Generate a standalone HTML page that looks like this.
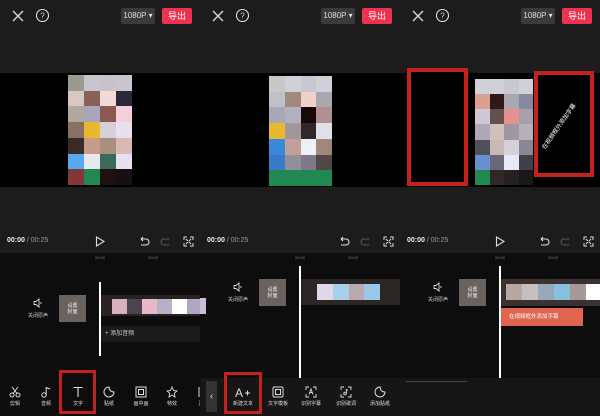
<!DOCTYPE html><html><head><meta charset="utf-8"><style>
*{margin:0;padding:0;box-sizing:border-box}
body{width:600px;height:416px;background:#000;position:relative;overflow:hidden;font-family:"Liberation Sans","Noto Sans CJK SC",sans-serif;color:#ddd}
.p{position:absolute;top:0;width:200px;height:416px;overflow:hidden;background:#0d0d0d}
.a{position:absolute}
.top{left:0;top:0;width:200px;height:73px;background:#1c1c1c}
.vid{left:0;top:73px;width:200px;height:114px;background:#000}
.mid{left:0;top:187px;width:200px;height:66px;background:#1c1c1c}
.res{left:121px;top:8px;width:34px;height:16px;background:#3a3a3a;border-radius:2px;font-size:8px;color:#ddd;line-height:16px;text-align:center}
.exp{left:162px;top:8px;width:30px;height:16px;background:#f0304f;border-radius:2px;font-size:9px;color:#fff;line-height:16px;text-align:center}
.mos{display:grid;grid-template-columns:repeat(4,1fr)}
.mos i{display:block}
.time{left:7px;top:237px;font-size:7px;color:#eee}
.time b{font-weight:bold}
.time span{color:#999}
.lbl{font-size:5px;color:#ccc;text-align:center;width:30px}
.tool{position:absolute;top:386px;width:30px;text-align:center;color:#ddd}
.tool svg{display:block;margin:0 auto}
.tool .t{font-size:5px;line-height:6px;margin-top:3px}
.red{border:3px solid #c1231c;position:absolute}
</style></head><body>

<!-- PANEL 1 -->
<div class="p" style="left:0">
<div class="a top"></div>
<svg class="a" style="left:11px;top:9px" width="14" height="14"><path d="M2 2L12 12M12 2L2 12" stroke="#ddd" stroke-width="1.3"/></svg>
<svg class="a" style="left:35px;top:8px" width="15" height="15"><circle cx="7.5" cy="7.5" r="6" fill="none" stroke="#ddd" stroke-width="1.1"/><text x="7.5" y="10.5" font-size="8" fill="#ddd" text-anchor="middle" font-family="Liberation Sans">?</text></svg>
<div class="a res">1080P ▾</div><div class="a exp">导出</div>
<div class="a vid"></div>
<div class="a mos" style="left:68px;top:75px;width:64px;height:110px;grid-template-rows:repeat(7,1fr)">
<i style="background:#9a9a90"></i><i style="background:#c8c6cc"></i><i style="background:#c6c4ca"></i><i style="background:#c8c6cc"></i>
<i style="background:#d8c8c0"></i><i style="background:#8a6058"></i><i style="background:#f2d8d8"></i><i style="background:#2a2838"></i>
<i style="background:#b0a8a0"></i><i style="background:#a8a6b8"></i><i style="background:#8a5a50"></i><i style="background:#f5d0dc"></i>
<i style="background:#8a7060"></i><i style="background:#e8b830"></i><i style="background:#d8d0d8"></i><i style="background:#e8e0ec"></i>
<i style="background:#3a2a2a"></i><i style="background:#c89a8a"></i><i style="background:#a89080"></i><i style="background:#d8b8b0"></i>
<i style="background:#5aa8f0"></i><i style="background:#e8e8f0"></i><i style="background:#3a6a58"></i><i style="background:#e8e0f0"></i>
<i style="background:#803838"></i><i style="background:#208850"></i><i style="background:#201010"></i><i style="background:#181010"></i>
</div>
<div class="a mid"></div>
<div class="a time"><b>00:00</b><span> / 00:25</span></div>
<svg class="a" style="left:95px;top:236px" width="10" height="11"><path d="M1.5 1L9 5.5L1.5 10Z" fill="none" stroke="#ddd" stroke-width="1.1"/></svg>
<svg class="a" style="left:138px;top:236px" width="12" height="11"><path d="M3 3H8a3 3 0 0 1 0 6H3M3 3l2-2M3 3l2 2" fill="none" stroke="#ddd" stroke-width="1.1"/></svg>
<svg class="a" style="left:160px;top:236px" width="12" height="11"><path d="M9 3H4a3 3 0 0 0 0 6H9" fill="none" stroke="#555" stroke-width="1.1"/></svg>
<svg class="a" style="left:183px;top:236px" width="11" height="11"><path d="M1 4V1H4M7 1H10V4M10 7V10H7M4 10H1V7M3 3L5 5M8 3L6 5M3 8L5 6M8 8L6 6" fill="none" stroke="#ddd" stroke-width="1"/></svg>
<div class="a" style="left:95px;top:255px;font-size:4px;color:#777">00:00</div>
<div class="a" style="left:148px;top:255px;font-size:4px;color:#777">00:02</div>
<svg class="a" style="left:33px;top:298px" width="10" height="10"><path d="M1 3.5H3L6 1V9L3 6.5H1Z M8 4v2" fill="none" stroke="#ddd" stroke-width=".9"/></svg>
<div class="a lbl" style="left:23px;top:312px">关闭原声</div>
<div class="a" style="left:59px;top:295px;width:27px;height:27px;background:#6a625e;font-size:5px;color:#eee;text-align:center;padding-top:8px;line-height:6px">设置<br>封面</div>
<div class="a" style="left:101px;top:295px;width:99px;height:21px;background:#2a2220"></div>
<div class="a mos" style="left:112px;top:299px;width:90px;height:15px;grid-template-columns:repeat(6,1fr)"><i style="background:#d8b0bc"></i><i style="background:#4a4350"></i><i style="background:#e8b8c8"></i><i style="background:#b8b0c8"></i><i style="background:#fff"></i><i style="background:#b0a8c0"></i></div>
<div class="a" style="left:101px;top:326px;width:99px;height:16px;background:#1a1a1a;font-size:6px;color:#ccc;line-height:16px;padding-left:4px">+ 添加音频</div>
<div class="a" style="left:99px;top:282px;width:2px;height:74px;background:#fff"></div>
<div class="tool" style="left:0"><svg width="12" height="12"><circle cx="3" cy="9" r="2" fill="none" stroke="#ddd"/><circle cx="9" cy="9" r="2" fill="none" stroke="#ddd"/><path d="M4 7.5L9 1M8 7.5L3 1" stroke="#ddd"/></svg><div class="t">剪辑</div></div>
<div class="tool" style="left:31px"><svg width="12" height="12"><circle cx="4" cy="9" r="2.2" fill="none" stroke="#ddd"/><path d="M6.2 9V1.5L10 3" fill="none" stroke="#ddd"/></svg><div class="t">音频</div></div>
<div class="tool" style="left:63px"><svg width="12" height="12"><path d="M1.5 1.5H10.5M6 1.5V11" stroke="#ddd" stroke-width="1.1"/></svg><div class="t">文字</div></div>
<div class="tool" style="left:94px"><svg width="12" height="12"><path d="M6 1A5 5 0 1 0 11 6C8 6 6 4 6 1Z" fill="none" stroke="#ddd"/></svg><div class="t">贴纸</div></div>
<div class="tool" style="left:126px"><svg width="12" height="12"><rect x="1" y="1" width="10" height="10" fill="none" stroke="#ddd"/><rect x="3.5" y="3.5" width="5" height="5" fill="none" stroke="#ddd"/></svg><div class="t">画中画</div></div>
<div class="tool" style="left:157px"><svg width="12" height="12"><path d="M6 1L7.5 4.5L11 5L8.3 7.3L9 11L6 9L3 11L3.7 7.3L1 5L4.5 4.5Z" fill="none" stroke="#ddd" stroke-width=".9"/></svg><div class="t">特效</div></div>
<div class="tool" style="left:186px"><svg width="12" height="12"><path d="M4 1V11" stroke="#ddd"/></svg><div class="t">素</div></div>
<div class="red" style="left:59px;top:370px;width:37px;height:44px"></div>
</div>

<!-- PANEL 2 -->
<div class="p" style="left:200px">
<div class="a top"></div>
<svg class="a" style="left:11px;top:9px" width="14" height="14"><path d="M2 2L12 12M12 2L2 12" stroke="#ddd" stroke-width="1.3"/></svg>
<svg class="a" style="left:35px;top:8px" width="15" height="15"><circle cx="7.5" cy="7.5" r="6" fill="none" stroke="#ddd" stroke-width="1.1"/><text x="7.5" y="10.5" font-size="8" fill="#ddd" text-anchor="middle" font-family="Liberation Sans">?</text></svg>
<div class="a res">1080P ▾</div><div class="a exp">导出</div>
<div class="a vid"></div>
<div class="a mos" style="left:69px;top:76px;width:63px;height:110px;grid-template-rows:repeat(7,1fr)">
<i style="background:#c8c8c8"></i><i style="background:#d0d0d8"></i><i style="background:#c8c8d0"></i><i style="background:#d0d0d8"></i>
<i style="background:#c0c0c8"></i><i style="background:#a08a80"></i><i style="background:#f0d0c8"></i><i style="background:#a8a8b0"></i>
<i style="background:#a8a8b8"></i><i style="background:#b0b0c0"></i><i style="background:#180808"></i><i style="background:#b09090"></i>
<i style="background:#e8b830"></i><i style="background:#a09898"></i><i style="background:#302828"></i><i style="background:#e0e0e8"></i>
<i style="background:#3a88d8"></i><i style="background:#c0a098"></i><i style="background:#f0f0f8"></i><i style="background:#a08878"></i>
<i style="background:#3a78c8"></i><i style="background:#909098"></i><i style="background:#807888"></i><i style="background:#504848"></i>
<i style="background:#208850"></i><i style="background:#208850"></i><i style="background:#208850"></i><i style="background:#208850"></i>
</div>
<div class="a mid"></div>
<div class="a time"><b>00:00</b><span> / 00:25</span></div>
<svg class="a" style="left:138px;top:236px" width="12" height="11"><path d="M3 3H8a3 3 0 0 1 0 6H3M3 3l2-2M3 3l2 2" fill="none" stroke="#ddd" stroke-width="1.1"/></svg>
<svg class="a" style="left:160px;top:236px" width="12" height="11"><path d="M9 3H4a3 3 0 0 0 0 6H9" fill="none" stroke="#555" stroke-width="1.1"/></svg>
<svg class="a" style="left:183px;top:236px" width="11" height="11"><path d="M1 4V1H4M7 1H10V4M10 7V10H7M4 10H1V7M3 3L5 5M8 3L6 5M3 8L5 6M8 8L6 6" fill="none" stroke="#ddd" stroke-width="1"/></svg>
<div class="a" style="left:95px;top:255px;font-size:4px;color:#777">00:00</div>
<div class="a" style="left:148px;top:255px;font-size:4px;color:#777">00:02</div>
<div class="a" style="left:0;top:298px;width:6px;height:16px;background:#c8c0d8"></div>
<svg class="a" style="left:33px;top:282px" width="10" height="10"><path d="M1 3.5H3L6 1V9L3 6.5H1Z M8 4v2" fill="none" stroke="#ddd" stroke-width=".9"/></svg>
<div class="a lbl" style="left:23px;top:296px">关闭原声</div>
<div class="a" style="left:59px;top:279px;width:27px;height:27px;background:#6a625e;font-size:5px;color:#eee;text-align:center;padding-top:8px;line-height:6px">设置<br>封面</div>
<div class="a" style="left:101px;top:279px;width:99px;height:26px;background:#2a2624"></div>
<div class="a mos" style="left:117px;top:284px;width:63px;height:16px"><i style="background:#e0d8e8"></i><i style="background:#a8d0e8"></i><i style="background:#b8a8b0"></i><i style="background:#98c8e8"></i></div>
<div class="a" style="left:99px;top:266px;width:2px;height:112px;background:#fff"></div>
<div class="a" style="left:0;top:378px;width:200px;height:38px;background:#161616"></div>
<div class="a" style="left:6px;top:381px;width:11px;height:31px;background:#333;color:#ddd;font-size:10px;line-height:31px;text-align:center">‹</div>
<div class="tool" style="left:28px"><svg width="16" height="12"><text x="0" y="11" font-size="12" fill="#ddd" font-family="Liberation Sans">A</text><path d="M10 7H15M12.5 4.5V9.5" stroke="#ddd"/></svg><div class="t">新建文本</div></div>
<div class="tool" style="left:63px"><svg width="12" height="12"><rect x="1" y="1" width="10" height="10" rx="1.5" fill="none" stroke="#ddd"/><rect x="3.5" y="3.5" width="5" height="5" fill="none" stroke="#ddd"/></svg><div class="t">文字模板</div></div>
<div class="tool" style="left:96px"><svg width="12" height="12"><path d="M1 4V1H4M8 1H11V4M11 8V11H8M4 11H1V8M4 8.5L6 3L8 8.5M4.8 6.5H7.2" fill="none" stroke="#ddd" stroke-width=".9"/></svg><div class="t">识别字幕</div></div>
<div class="tool" style="left:131px"><svg width="12" height="12"><path d="M1 4V1H4M8 1H11V4M11 8V11H8M4 11H1V8" fill="none" stroke="#ddd" stroke-width=".9"/><circle cx="5" cy="7.5" r="1.3" fill="none" stroke="#ddd" stroke-width=".9"/><path d="M6.3 7.5V3.5L8 4.3" fill="none" stroke="#ddd" stroke-width=".9"/></svg><div class="t">识别歌词</div></div>
<div class="tool" style="left:165px"><svg width="12" height="12"><path d="M6 1A5 5 0 1 0 11 6C8 6 6 4 6 1Z" fill="none" stroke="#ddd"/></svg><div class="t">添加贴纸</div></div>
<div class="red" style="left:24px;top:372px;width:38px;height:42px"></div>
</div>

<!-- PANEL 3 -->
<div class="p" style="left:400px">
<div class="a top"></div>
<svg class="a" style="left:11px;top:9px" width="14" height="14"><path d="M2 2L12 12M12 2L2 12" stroke="#ddd" stroke-width="1.3"/></svg>
<svg class="a" style="left:35px;top:8px" width="15" height="15"><circle cx="7.5" cy="7.5" r="6" fill="none" stroke="#ddd" stroke-width="1.1"/><text x="7.5" y="10.5" font-size="8" fill="#ddd" text-anchor="middle" font-family="Liberation Sans">?</text></svg>
<div class="a res">1080P ▾</div><div class="a exp">导出</div>
<div class="a vid"></div>
<div class="a mos" style="left:75px;top:79px;width:58px;height:106px;grid-template-rows:repeat(7,1fr)">
<i style="background:#d0d0d8"></i><i style="background:#d0d0d8"></i><i style="background:#c8c8d0"></i><i style="background:#d0d0d8"></i>
<i style="background:#d8a090"></i><i style="background:#301818"></i><i style="background:#a8a8b0"></i><i style="background:#8888a0"></i>
<i style="background:#d0c8d0"></i><i style="background:#605050"></i><i style="background:#e89090"></i><i style="background:#a8a0a8"></i>
<i style="background:#b0a8b8"></i><i style="background:#d0c0b8"></i><i style="background:#a098a0"></i><i style="background:#b8b0b8"></i>
<i style="background:#505058"></i><i style="background:#c8b8b8"></i><i style="background:#d8d0d8"></i><i style="background:#8a8898"></i>
<i style="background:#6890d0"></i><i style="background:#686878"></i><i style="background:#e8e8f8"></i><i style="background:#404048"></i>
<i style="background:#208850"></i><i style="background:#302828"></i><i style="background:#282020"></i><i style="background:#181818"></i>
</div>
<div class="red" style="left:7px;top:68px;width:61px;height:118px;background:#000;border-width:4px"></div>
<div class="red" style="left:134px;top:71px;width:60px;height:106px;background:#000;border-width:4px"></div>
<div class="a" style="left:128px;top:115px;width:70px;font-size:6px;color:#fff;transform:rotate(-55deg);white-space:nowrap">在视频框外添加字幕</div>
<div class="a mid"></div>
<div class="a time"><b>00:00</b><span> / 00:25</span></div>
<svg class="a" style="left:95px;top:236px" width="10" height="11"><path d="M1.5 1L9 5.5L1.5 10Z" fill="none" stroke="#ddd" stroke-width="1.1"/></svg>
<svg class="a" style="left:138px;top:236px" width="12" height="11"><path d="M3 3H8a3 3 0 0 1 0 6H3M3 3l2-2M3 3l2 2" fill="none" stroke="#ddd" stroke-width="1.1"/></svg>
<svg class="a" style="left:160px;top:236px" width="12" height="11"><path d="M9 3H4a3 3 0 0 0 0 6H9" fill="none" stroke="#555" stroke-width="1.1"/></svg>
<svg class="a" style="left:183px;top:236px" width="11" height="11"><path d="M1 4V1H4M7 1H10V4M10 7V10H7M4 10H1V7M3 3L5 5M8 3L6 5M3 8L5 6M8 8L6 6" fill="none" stroke="#ddd" stroke-width="1"/></svg>
<div class="a" style="left:95px;top:255px;font-size:4px;color:#777">00:00</div>
<div class="a" style="left:148px;top:255px;font-size:4px;color:#777">00:02</div>
<svg class="a" style="left:33px;top:282px" width="10" height="10"><path d="M1 3.5H3L6 1V9L3 6.5H1Z M8 4v2" fill="none" stroke="#ddd" stroke-width=".9"/></svg>
<div class="a lbl" style="left:23px;top:296px">关闭原声</div>
<div class="a" style="left:59px;top:279px;width:27px;height:27px;background:#6a625e;font-size:5px;color:#eee;text-align:center;padding-top:8px;line-height:6px">设置<br>封面</div>
<div class="a" style="left:101px;top:279px;width:99px;height:27px;background:#3a3230"></div>
<div class="a mos" style="left:106px;top:284px;width:80px;height:16px;grid-template-columns:repeat(5,1fr)"><i style="background:#b8a8a0"></i><i style="background:#c8c0c0"></i><i style="background:#98a8b8"></i><i style="background:#88c0e0"></i><i style="background:#a89898"></i></div>
<div class="a" style="left:186px;top:284px;width:14px;height:16px;background:#fff"></div>
<div class="a" style="left:101px;top:308px;width:82px;height:18px;background:#e0654f;font-size:5.5px;color:#fff;line-height:18px;padding-left:8px">在视频框外添加字幕</div>
<div class="a" style="left:99px;top:266px;width:2px;height:112px;background:#fff"></div>
<div class="a" style="left:0;top:378px;width:200px;height:38px;background:#161616"></div>
<div class="a" style="left:6px;top:381px;width:61px;height:1px;background:#444"></div>
</div>
</body></html>
